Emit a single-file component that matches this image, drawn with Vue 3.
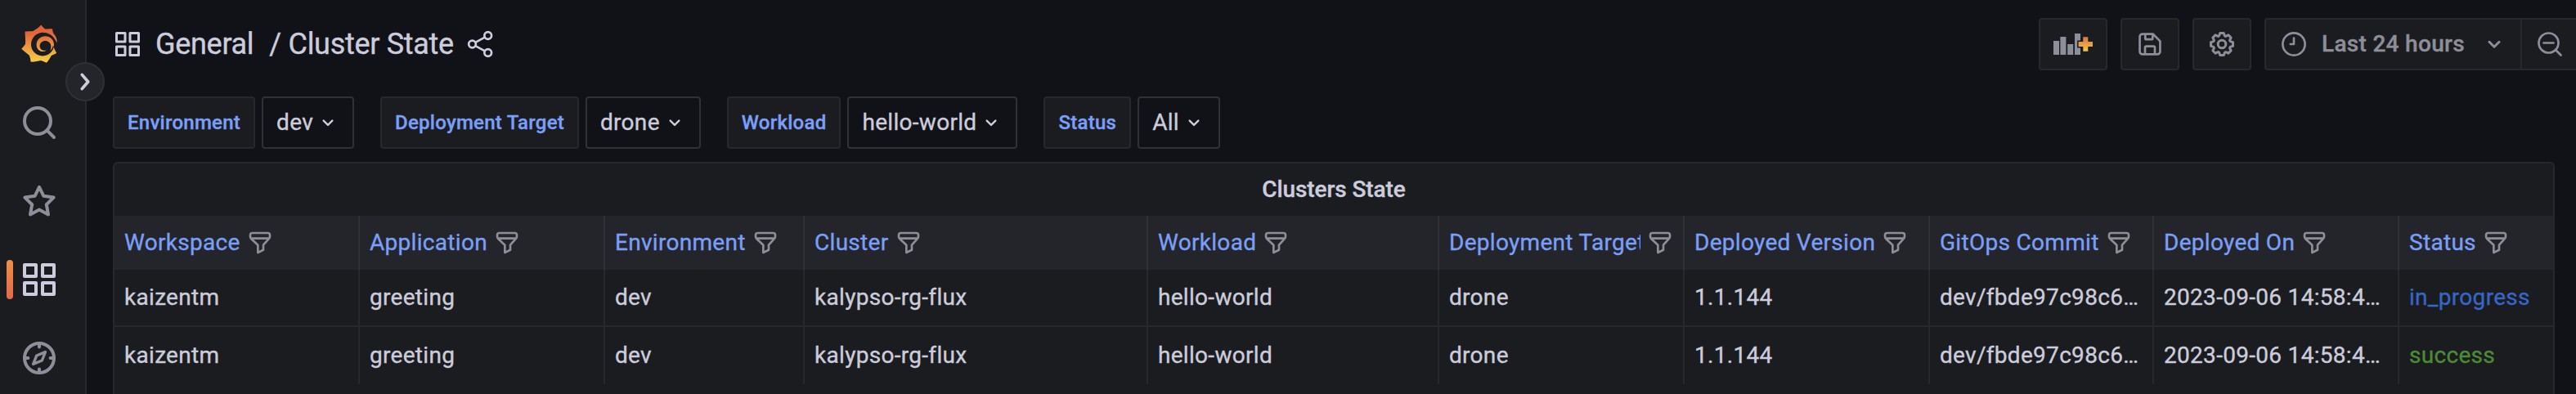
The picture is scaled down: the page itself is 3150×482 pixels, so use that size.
<script setup>
const variables = [
  { label: 'Environment', value: 'dev' },
  { label: 'Deployment Target', value: 'drone' },
  { label: 'Workload', value: 'hello-world' },
  { label: 'Status', value: 'All' },
]
const columns = [
  'Workspace', 'Application', 'Environment', 'Cluster', 'Workload',
  'Deployment Target', 'Deployed Version', 'GitOps Commit', 'Deployed On', 'Status',
]
const base = [
  'kaizentm', 'greeting', 'dev', 'kalypso-rg-flux', 'hello-world',
  'drone', '1.1.144', 'dev/fbde97c98c6…', '2023-09-06 14:58:4…',
]
const rows = [
  { cells: base, status: 'in_progress', tone: 'blue' },
  { cells: base, status: 'success', tone: 'green' },
]
</script>

<template>
  <div class="app">
    <nav class="sidebar">
      <svg class="logo" viewBox="0 0 44 47">
        <defs>
          <linearGradient id="brand" x1="0" y1="1" x2="0" y2="0">
            <stop offset="0" stop-color="#f4d044" />
            <stop offset="0.35" stop-color="#efa241" />
            <stop offset="0.75" stop-color="#e2683a" />
            <stop offset="1" stop-color="#df5f38" />
          </linearGradient>
        </defs>
        <path fill="url(#brand)" fill-rule="evenodd" d="M24.2 0.4 C25.8 2.4 27.3 4.2 29.2 5.6 C32.3 5.4 35 4.9 38.2 5.5 C38.2 7.8 38.6 9.4 39.6 11.2 C42.3 14 44 18 43.8 22.5 C42.6 20.8 41.9 19 40.6 17.3 C37.4 12.6 32.2 9.8 26.5 9.8 C18.4 9.8 12 16.3 12 24.6 C12 32.5 18.3 38.4 26.1 38.4 C34 38.4 40 32.3 40 24.6 C40 18.5 35.4 14.2 29.6 14.2 C23.4 14.2 18.6 18.7 18.6 24.8 C18.6 30 22.4 33.4 27 33.1 C28.8 33 30.2 32.3 30.7 31.6 C28.2 32.3 24.8 31.5 23.4 29.2 C21.6 26 23 21.8 26.7 20.4 C31.2 18.8 36.2 21.6 36.4 26.4 C36.6 28.6 36 30.6 35.2 32.2 C37 30.8 38.6 28.4 38.8 25.6 C40 29 41.4 32 43.2 35 C40.6 36.4 38.4 37 36.6 38.2 C35.4 40.8 33.4 44.2 30.8 46.8 C28.4 45.8 26.4 44.8 24 44 C20.4 44.8 15.6 46 11.4 45.6 C11.6 42.6 10.8 40.4 9.8 37.8 C6.8 35.2 3 32.4 0.2 29.8 C2.2 27.6 3.8 26 5 23.8 C5.4 19.4 4.6 13.8 4.6 8.6 C7.8 8 11.2 8.4 14.6 7.9 C17.8 5.6 21.6 3.8 24.2 0.4 Z" />
      </svg>
      <button class="toggle">
        <svg viewBox="0 0 24 24"><path d="M8.800 4.600 L15.200 12 L8.800 19.400" /></svg>
      </button>
      <div class="nav">
        <svg viewBox="0 0 24 24"><circle cx="11" cy="11" r="8" /><path d="M16.7 16.7 L21 21" /></svg>
        <svg viewBox="0 0 24 24"><path d="M12 3.4 L14.7 8.9 L20.8 9.8 L16.4 14.1 L17.5 20.2 L12 17.3 L6.5 20.2 L7.6 14.1 L3.2 9.8 L9.3 8.9 Z" /></svg>
        <div class="nav-active">
          <svg viewBox="0 0 24 24"><path d="M3 3h7v7H3zM14 3h7v7h-7zM3 14h7v7H3zM14 14h7v7h-7z" /></svg>
        </div>
        <svg viewBox="0 0 24 24"><circle cx="12" cy="12" r="9" /><path d="M12 3v2.2M12 18.8V21M3 12h2.2M18.8 12H21" /><path d="M15.7 8.3 L13.7 13.5 L8.3 15.7 L10.4 10.5 Z" stroke-width="1.7" /></svg>
      </div>
    </nav>

    <main class="main">
      <header class="top">
        <div class="crumbs">
          <svg class="ic" viewBox="0 0 24 24"><path d="M3 3h7v7H3zM14 3h7v7h-7zM3 14h7v7H3zM14 14h7v7h-7z" /></svg>
          <span class="folder">General</span>
          <span class="title">/ Cluster State</span>
          <svg class="ic share" viewBox="0 0 24 24"><circle cx="5" cy="12" r="2.900" /><circle cx="17.800" cy="5" r="2.900" /><circle cx="17.800" cy="19" r="2.900" /><path d="M7.600 10.600 L15.200 6.400 M7.600 13.400 L15.200 17.600" /></svg>
        </div>
        <div class="tools">
          <button class="btn add">
            <svg viewBox="0 0 48 26">
              <path class="bars" d="M0 9h7v17H0zM8.400 4h7v22h-7zM17.200 13h7v13h-7zM26 0h7v26h-7z" />
              <path class="plus" d="M36.300 4.300h6v5.700h5.700v6h-5.700v5.700h-6v-5.700h-5.700v-6h5.700z" />
              <defs>
                <linearGradient id="plus" x1="0" y1="0" x2="0" y2="1">
                  <stop offset="0.1" stop-color="#e07d43" />
                  <stop offset="1" stop-color="#f2c944" />
                </linearGradient>
              </defs>
            </svg>
          </button>
          <button class="btn">
            <svg class="ic save" viewBox="0 0 24 24"><path d="M6 3.700h8.400L20.300 9.600V18a2.300 2.300 0 0 1-2.300 2.300H6A2.300 2.300 0 0 1 3.700 18V6A2.300 2.300 0 0 1 6 3.700z M8.200 4v3.300a.8.8 0 0 0 .8.8h4.400a.8.8 0 0 0 .8-.8V4 M8 20v-5.200a1 1 0 0 1 1-1h6a1 1 0 0 1 1 1V20" /></svg>
          </button>
          <button class="btn">
            <svg class="ic" viewBox="0 0 24 24">
              <path class="solid" d="M21.320 9.550l-1.890-.63.89-1.780A1 1 0 0 0 20.130 6L18 3.870a1 1 0 0 0-1.150-.19l-1.780.89-.63-1.890A1 1 0 0 0 13.500 2h-3a1 1 0 0 0-.95.68L8.920 4.570 7.140 3.680A1 1 0 0 0 6 3.870L3.870 6a1 1 0 0 0-.19 1.150l.89 1.780-1.890.63A1 1 0 0 0 2 10.500v3a1 1 0 0 0 .68.95l1.890.63-.89 1.780A1 1 0 0 0 3.870 18L6 20.130a1 1 0 0 0 1.150.19l1.780-.89.63 1.890a1 1 0 0 0 .95.68h3a1 1 0 0 0 .95-.68l.63-1.890 1.780.89A1 1 0 0 0 18 20.130L20.130 18a1 1 0 0 0 .19-1.150l-.89-1.780 1.890-.63A1 1 0 0 0 22 13.500v-3A1 1 0 0 0 21.320 9.550ZM20 12.780l-1.200.4A2 2 0 0 0 17.640 16l.57 1.140-1.100 1.100L16 17.640a2 2 0 0 0-2.790 1.160l-.4 1.200H11.220l-.4-1.200A2 2 0 0 0 8 17.640l-1.140.57-1.100-1.100L6.360 16A2 2 0 0 0 5.200 13.180L4 12.780V11.220l1.200-.4A2 2 0 0 0 6.360 8L5.790 6.890l1.100-1.100L8 6.360A2 2 0 0 0 10.820 5.200l.4-1.200h1.560l.4 1.200A2 2 0 0 0 16 6.360l1.140-.57 1.100 1.100L17.640 8a2 2 0 0 0 1.160 2.790l1.200.4Z" />
              <circle cx="12" cy="12" r="3.200" />
            </svg>
          </button>
          <div class="range">
            <button class="time">
              <svg class="ic" viewBox="0 0 24 24"><circle cx="12" cy="12" r="9.100" /><path d="M12 7v5H9.200" stroke-linecap="round" /></svg>
              <span>Last 24 hours</span>
              <svg class="ic chev" viewBox="0 0 24 24"><path d="M8 10.200 L12 14.200 L16 10.200" /></svg>
            </button>
            <button class="zoomout">
              <svg class="ic" viewBox="0 0 24 24"><circle cx="11" cy="11" r="8" /><path d="M7 11h8M16.700 16.700 L21 21" stroke-linecap="round" /></svg>
            </button>
          </div>
        </div>
      </header>

      <section class="vars">
        <div v-for="v in variables" :key="v.label" class="var">
          <label>{{ v.label }}</label>
          <div class="select">
            <span>{{ v.value }}</span>
            <svg viewBox="0 0 24 24"><path d="M8 10.200 L12 14.200 L16 10.200" /></svg>
          </div>
        </div>
      </section>

      <section class="panel">
        <h2>Clusters State</h2>
        <div class="table">
          <div class="row head">
            <div v-for="c in columns" :key="c" class="cell">
              <span class="name">{{ c }}</span>
              <svg viewBox="0 0 24 24"><path d="M5 3h14a2 2 0 0 1 2 2v1.200a3 3 0 0 1-.8 2L15 14v4.600L10 21v-7L3.800 8.200a3 3 0 0 1-.8-2V5a2 2 0 0 1 2-2z M3.200 8h17.600" /></svg>
            </div>
          </div>
          <div v-for="(r, i) in rows" :key="i" class="row">
            <div v-for="(c, j) in r.cells" :key="j" class="cell"><span class="text">{{ c }}</span></div>
            <div class="cell"><span class="text" :class="r.tone">{{ r.status }}</span></div>
          </div>
        </div>
      </section>
    </main>
  </div>
</template>

<style>
body { background: #111217; overflow: hidden; }
</style>

<style scoped>
* { box-sizing: border-box; }
.app {
  display: flex;
  width: 3150px;
  height: 482px;
  overflow: hidden;
  background: #111217;
  color: #ccccdc;
  font: 400 28px/44px Roboto, sans-serif;
  letter-spacing: 0.3px;
  -webkit-text-stroke: 0.35px currentColor;
}
svg { fill: none; stroke: currentColor; stroke-width: 2; stroke-linejoin: round; flex: none; display: block; }
button { font: inherit; letter-spacing: inherit; color: inherit; margin: 0; padding: 0; }
.sidebar { position: relative; width: 106px; flex: none; background: #1b1c1f; border-right: 2px solid #27282c; }
.logo { width: 44px; height: 47px; margin: 30px 0 0 26px; stroke: none; }
.toggle {
  position: absolute; z-index: 1; left: 80px; top: 76px; width: 48px; height: 48px;
  border: 2px solid #2f3035; border-radius: 50%; background: #24252a;
  display: flex; align-items: center; justify-content: center;
}
.toggle svg { width: 28px; height: 28px; stroke-width: 3.2; stroke-linecap: round; }
.nav { display: flex; flex-direction: column; align-items: center; gap: 48px; margin-top: 49px; padding-right: 8px; color: #8e8e99; }
.nav svg { width: 48px; height: 48px; stroke-linecap: round; }
.nav-active { position: relative; color: #ccccdc; }
.nav-active::before {
  content: ''; position: absolute; left: -16px; top: 0; width: 8px; height: 48px;
  border-radius: 4px; background: linear-gradient(#f08f45, #e4684b);
}
.main { flex: 1; min-width: 0; padding-left: 32px; }
.ic { width: 36px; height: 36px; }
.top { display: flex; justify-content: space-between; height: 118px; padding-top: 22px; }
.crumbs { display: flex; align-items: center; height: 64px; font-size: 36px; letter-spacing: -0.3px; }
.folder { margin-left: 16px; }
.title { margin-left: 19px; }
.share { margin-left: 15px; stroke-width: 1.8; }
.tools { display: flex; gap: 16px; height: 64px; margin-right: -32px; color: #8e8e99; }
.btn { width: 72px; border: 2px solid #27282c; border-radius: 4px; background: #1b1c1f; display: flex; align-items: center; justify-content: center; }
.btn.add { width: 84px; }
.btn.add svg { width: 48px; height: 26px; stroke: none; overflow: visible; }
.save { stroke-width: 1.8; }
.solid { fill: currentColor; stroke: none; }
.bars { fill: #8e8e99; }
.plus { fill: url(#plus); stroke: #1b1c1f; stroke-width: 3; paint-order: stroke; stroke-linejoin: miter; }
.range { display: flex; border: 2px solid #27282c; border-radius: 4px; background: #1b1c1f; }
.time, .zoomout { border: 0; background: none; display: flex; align-items: center; }
.time { width: 313px; padding-left: 16px; border-right: 2px solid #27282c; font-weight: 500; }
.time .ic, .zoomout .ic { stroke-width: 1.8; }
.time span { margin-left: 16px; white-space: nowrap; }
.time .chev { margin-left: 18px; stroke-width: 2; stroke-linecap: round; }
.zoomout { width: 96px; padding-left: 16px; }
.vars { display: flex; gap: 32px; }
.var { display: flex; gap: 8px; height: 64px; }
.var label {
  padding: 0 16px; border: 2px solid #27282c; border-radius: 4px; background: #1b1c1f;
  color: #7a9ff8; font-weight: 500; font-size: 24px; line-height: 60px; letter-spacing: 0.26px;
}
.select { display: flex; align-items: center; border: 2px solid #303136; border-radius: 4px; padding: 0 14px 0 16px; }
.select svg { width: 32px; height: 32px; margin-left: 2px; stroke-width: 1.800; stroke-linecap: round; }
.panel { width: 2986px; height: 300px; margin-top: 16px; border: 2px solid #27282c; border-radius: 6px; background: #1b1c1f; }
h2 { margin: 0; height: 64px; font: 500 28px/64px Roboto, sans-serif; letter-spacing: -0.1px; text-align: center; }
.row { display: grid; grid-template-columns: 300px 300px 244px 420px 356px 300px 300px 274px 300px 188px; height: 70px; border-bottom: 2px solid #27282c; }
.row:last-child { border-bottom: 0; }
.row.head { height: 66px; border: 0; background: #24252a; color: #7a9ff8; }
.cell { display: flex; align-items: center; min-width: 0; padding: 0 12px; border-right: 2px solid #27282c; }
.head .cell { border-color: #303136; }
.cell:last-child { border-right: 0; }
.text, .name { overflow: hidden; white-space: nowrap; }
.head svg { width: 32px; height: 32px; margin-left: 8px; color: #8e8e99; }
.blue { color: #3566c8; }
.green { color: #4c8b35; }
</style>
